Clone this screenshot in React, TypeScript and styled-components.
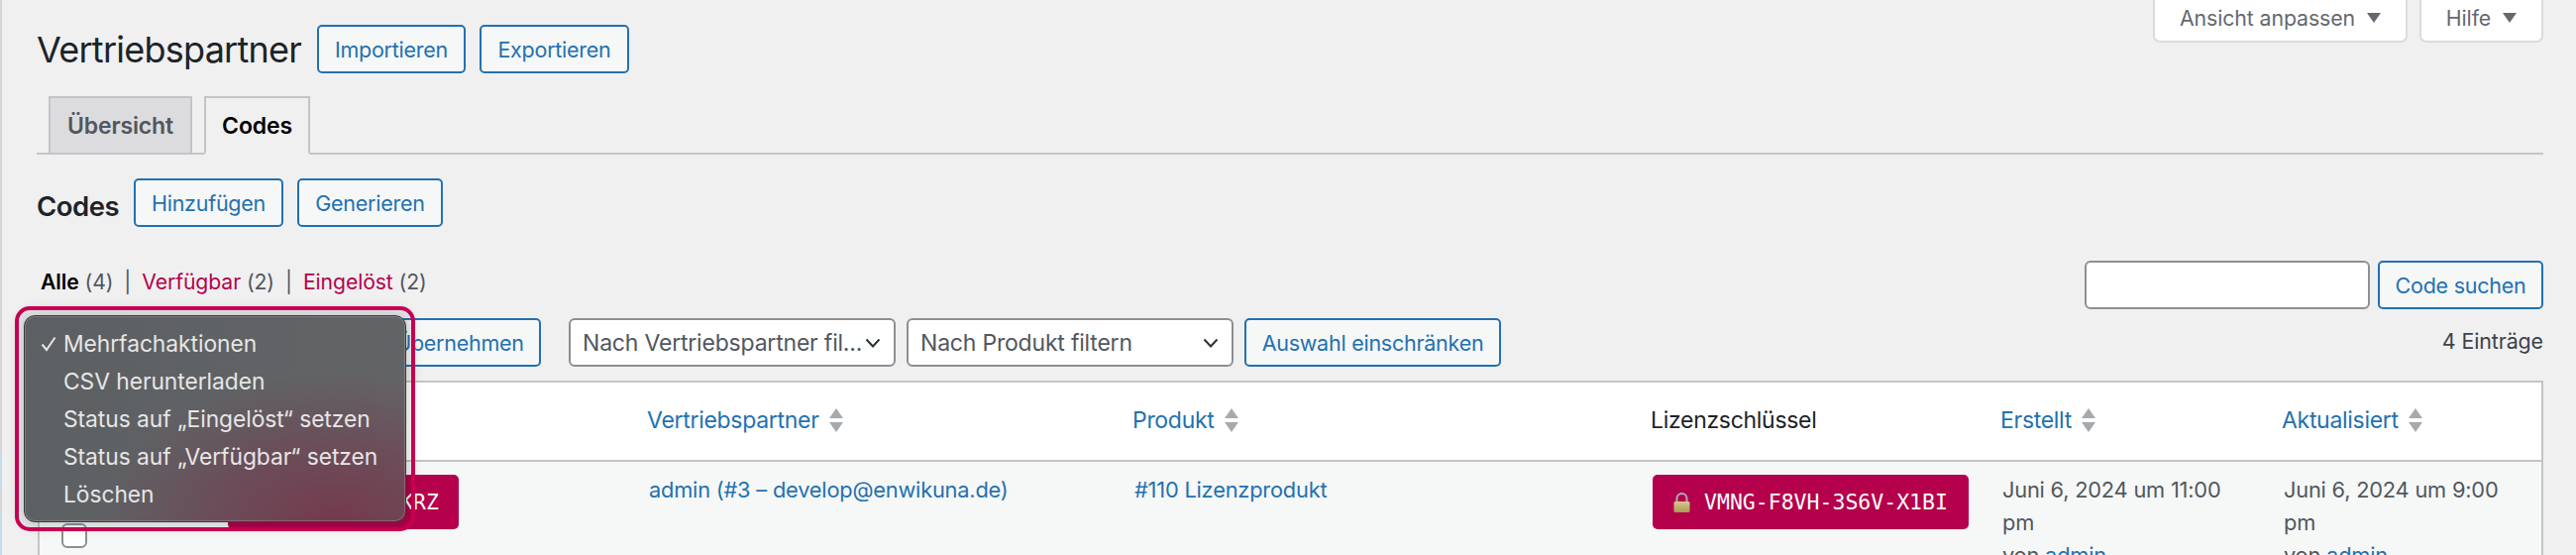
import React from "react";
import styled, { createGlobalStyle } from "styled-components";

const Global = createGlobalStyle`
  html, body { margin: 0; padding: 0; background: #f0f0f1; }
  body { width: 2600px; height: 560px; overflow: hidden; font-family: Inter, "Liberation Sans", sans-serif; font-size: 21px; color: #3c434a; }
  * { box-sizing: border-box; }
`;

const Page = styled.div`
  display: flex;
  width: 2600px;
  height: 560px;
  overflow: hidden;
  position: relative;
`;
const Edge = styled.div`
  width: 2px;
  flex: none;
  background: linear-gradient(to bottom, #d6d6d8 0 460px, #c6dcec 460px 491px, #d6d6d8 491px 517px, #c6dcec 517px);
`;
const Main = styled.main`
  flex: 1;
  min-width: 0;
  padding: 0 33px 0 35px;
`;
const Head = styled.header`
  display: flex;
  justify-content: space-between;
  align-items: flex-start;
  height: 97px;
`;
const TitleRow = styled.div`
  display: flex;
  align-items: center;
  gap: 14px;
  padding-top: 25px;
`;
const Title = styled.h1`
  margin: 0;
  font-size: 36px;
  font-weight: 400;
  letter-spacing: -0.75px;
  width: 269px;
  color: #1d2327;
  white-space: nowrap;
`;
const Button = styled.button<{ $w: number }>`
  width: ${(p) => p.$w}px;
  height: 49px;
  flex: none;
  padding: 0;
  border: 2px solid #2271b1;
  border-radius: 5px;
  background: #f6f7f7;
  color: #2271b1;
  font: 400 21.5px Inter, "Liberation Sans", sans-serif;
  letter-spacing: -0.25px;
  white-space: nowrap;
`;
const MetaLinks = styled.div`
  display: flex;
  gap: 12px;
`;
const MetaTab = styled.div<{ $w: number }>`
  width: ${(p) => p.$w}px;
  height: 43px;
  display: flex;
  align-items: center;
  justify-content: center;
  gap: 12px;
  padding-bottom: 6px;
  background: #fff;
  border: 2px solid #dcdcde;
  border-top: none;
  border-radius: 0 0 7px 7px;
  color: #646970;
  font-size: 21.3px;
  letter-spacing: -0.1px;
`;
const Caret = styled.span`
  width: 0;
  height: 0;
  border-left: 7px solid transparent;
  border-right: 7px solid transparent;
  border-top: 10px solid #646970;
`;
const Tabs = styled.nav`
  display: flex;
  gap: 12px;
  height: 59px;
  padding-left: 12px;
  border-bottom: 2px solid #c3c4c7;
`;
const Tab = styled.div<{ $active?: boolean; $w: number }>`
  width: ${(p) => p.$w}px;
  height: 59px;
  display: flex;
  align-items: center;
  justify-content: center;
  border: 2px solid #c3c4c7;
  border-bottom-color: ${(p) => (p.$active ? "#f0f0f1" : "#c3c4c7")};
  background: ${(p) => (p.$active ? "#f0f0f1" : "#dcdcde")};
  color: ${(p) => (p.$active ? "#000" : "#50575e")};
  font-size: 23px;
  font-weight: 600;
  letter-spacing: -0.15px;
`;
const SectionRow = styled.div`
  display: flex;
  align-items: center;
  gap: 14px;
  margin-top: 24px;
`;
const SectionTitle = styled.h2`
  margin: 0;
  padding-top: 6px;
  font-size: 27.5px;
  font-weight: 600;
  letter-spacing: -0.5px;
  color: #1d2327;
  width: 84px;
`;
const StatusRow = styled.div`
  display: flex;
  justify-content: space-between;
  align-items: center;
  margin-top: 34px;
  height: 49px;
`;
const StatusList = styled.div`
  display: flex;
  gap: 11px;
  padding: 0 0 8px 4px;
  font-size: 21.2px;
  letter-spacing: -0.1px;
  color: #50575e;
`;
const StatusLabel = styled.span<{ $strong?: boolean }>`
  color: ${(p) => (p.$strong ? "#000" : "#b5004b")};
  font-weight: ${(p) => (p.$strong ? 600 : 400)};
`;
const Search = styled.div`
  display: flex;
  gap: 8px;
`;
const SearchInput = styled.div`
  width: 288px;
  height: 49px;
  background: #fff;
  border: 2px solid #8c8f94;
  border-radius: 6px;
`;
const Toolbar = styled.div`
  display: flex;
  align-items: center;
  margin-top: 9px;
  height: 49px;
`;
const Select = styled.div<{ $w: number; $ml: number }>`
  display: flex;
  align-items: center;
  justify-content: space-between;
  width: ${(p) => p.$w}px;
  height: 49px;
  flex: none;
  margin-left: ${(p) => p.$ml}px;
  padding: 0 13px 0 12px;
  background: #fff;
  border: 2px solid #8c8f94;
  border-radius: 6px;
  color: #50575e;
  font-size: 23px;
  letter-spacing: -0.2px;
  white-space: nowrap;
`;
const Count = styled.div`
  margin-left: auto;
  padding-bottom: 3px;
  font-size: 21.4px;
  letter-spacing: -0.1px;
  color: #3c434a;
`;
const ApplyGap = styled.div<{ $ml: number }>`
  margin-left: ${(p) => p.$ml}px;
`;
const Table = styled.div`
  margin-top: 14px;
  margin-left: 1px;
  border: 2px solid #c3c4c7;
  border-bottom: none;
  background: #fff;
`;
const Grid = styled.div<{ $body?: boolean }>`
  display: grid;
  grid-template-columns: 172px 425px 490px 523px 353px 284px 1fr;
  height: ${(p) => (p.$body ? "200px" : "80px")};
  background: ${(p) => (p.$body ? "#f6f7f7" : "#fff")};
  border-bottom: ${(p) => (p.$body ? "none" : "2px solid #c3c4c7")};
`;
const HeadCell = styled.div<{ $link?: boolean }>`
  display: flex;
  align-items: center;
  gap: 10px;
  padding-left: 16px;
  padding-bottom: 2px;
  font-size: 23px;
  letter-spacing: -0.3px;
  color: ${(p) => (p.$link ? "#2271b1" : "#1d2327")};
`;
const BodyCell = styled.div`
  padding: 12px 30px 0 18px;
  font-size: 21.8px;
  line-height: 33px;
  letter-spacing: -0.2px;
  color: #50575e;
`;
const CheckCell = styled.div`
  padding: 62px 0 0 22px;
`;
const Checkbox = styled.div`
  width: 26px;
  height: 25px;
  border: 2px solid #8c8f94;
  border-radius: 6px;
  background: #fff;
`;
const Link = styled.span`
  color: #2271b1;
`;
const KeyBadge = styled.div`
  display: flex;
  align-items: center;
  gap: 14px;
  width: 319px;
  height: 55px;
  margin-top: 1px;
  padding-left: 21px;
  background: #b5004b;
  border-radius: 5px;
  color: #fff;
  font-family: "DejaVu Sans Mono", "Liberation Mono", monospace;
  font-size: 21.5px;
  letter-spacing: 0;
  white-space: nowrap;
`;
const CodeBadge = styled(KeyBadge)`
  width: 233px;
  justify-content: flex-end;
  padding: 0 20px 0 0;
`;
const Frame = styled.div`
  position: absolute;
  left: 15px;
  top: 309px;
  width: 404px;
  height: 227px;
  border: 4px solid #c60050;
  border-radius: 15px;
  z-index: 3;
  pointer-events: none;
`;
const Menu = styled.div`
  position: absolute;
  left: 24px;
  top: 318px;
  width: 386px;
  height: 209px;
  padding: 9px 0 0 39px;
  z-index: 2;
  border-radius: 11px;
  background: radial-gradient(ellipse 62% 72% at 82% 100%, #743a4e 0%, rgba(116, 58, 78, 0.55) 50%, rgba(116, 58, 78, 0) 100%),
    linear-gradient(100deg, #5c6063 0%, #636466 100%);
  border: 1px solid #3a3a3c;
  box-shadow: inset 0 0 0 1px rgba(255, 255, 255, 0.18), 0 0 12px 6px rgba(0, 0, 0, 0.14);
  color: #e6e6e6;
  font-size: 22.8px;
  letter-spacing: -0.05px;
`;
const MenuItem = styled.div`
  position: relative;
  height: 38px;
  line-height: 38px;
  white-space: nowrap;
`;
const Tick = styled.svg`
  position: absolute;
  left: -23px;
  top: 11px;
`;

function SortArrows() {
  return (
    <svg width="14" height="25" viewBox="0 0 14 25" aria-hidden="true">
      <path d="M7 0 14 10H0Z M0 14H14L7 24Z" fill="#a7aaad" />
    </svg>
  );
}

function Chevron() {
  return (
    <svg width="16" height="10" viewBox="0 0 16 10" aria-hidden="true">
      <path d="M1.5 1.5 8 8.5l6.500-7" fill="none" stroke="#2c3338" strokeWidth="2" />
    </svg>
  );
}

function Lock() {
  return (
    <svg width="17" height="20" viewBox="0 0 17 20" aria-hidden="true">
      <defs>
        <linearGradient id="lockBody" x1="0" y1="0" x2="0" y2="1">
          <stop offset="0" stopColor="#d8c98a" />
          <stop offset="1" stopColor="#a89a55" />
        </linearGradient>
      </defs>
      <path d="M3.500 9V6a5 5 0 0 1 10 0v3" fill="none" stroke="#a9b0b8" strokeWidth="2" />
      <rect x="0.500" y="9" width="16" height="11" rx="1.500" fill="url(#lockBody)" />
    </svg>
  );
}

const menuItems = [
  "Mehrfachaktionen",
  "CSV herunterladen",
  "Status auf „Eingelöst“ setzen",
  "Status auf „Verfügbar“ setzen",
  "Löschen",
];

export default function App() {
  return (
    <Page>
      <Global />
      <Edge />
      <Main>
        <Head>
          <TitleRow>
            <Title>Vertriebspartner</Title>
            <Button $w={150}>Importieren</Button>
            <Button $w={151}>Exportieren</Button>
          </TitleRow>
          <MetaLinks>
            <MetaTab $w={257}>
              Ansicht anpassen <Caret />
            </MetaTab>
            <MetaTab $w={125}>
              Hilfe <Caret />
            </MetaTab>
          </MetaLinks>
        </Head>
        <Tabs>
          <Tab $w={145}>Übersicht</Tab>
          <Tab $w={107} $active>
            Codes
          </Tab>
        </Tabs>
        <SectionRow>
          <SectionTitle>Codes</SectionTitle>
          <Button $w={151}>Hinzufügen</Button>
          <Button $w={147}>Generieren</Button>
        </SectionRow>
        <StatusRow>
          <StatusList>
            <span>
              <StatusLabel $strong>Alle</StatusLabel> (4)
            </span>
            <span>|</span>
            <span>
              <StatusLabel>Verfügbar</StatusLabel> (2)
            </span>
            <span>|</span>
            <span>
              <StatusLabel>Eingelöst</StatusLabel> (2)
            </span>
          </StatusList>
          <Search>
            <SearchInput />
            <Button $w={167}>Code suchen</Button>
          </Search>
        </StatusRow>
        <Toolbar>
          <ApplyGap $ml={345}>
            <Button $w={164}>Übernehmen</Button>
          </ApplyGap>
          <Select $w={330} $ml={28}>
            Nach Vertriebspartner fil...
            <Chevron />
          </Select>
          <Select $w={330} $ml={11}>
            Nach Produkt filtern
            <Chevron />
          </Select>
          <ApplyGap $ml={11}>
            <Button $w={259}>Auswahl einschränken</Button>
          </ApplyGap>
          <Count>4 Einträge</Count>
        </Toolbar>
        <Table>
          <Grid>
            <div />
            <HeadCell />
            <HeadCell $link>
              Vertriebspartner <SortArrows />
            </HeadCell>
            <HeadCell $link>
              Produkt <SortArrows />
            </HeadCell>
            <HeadCell>Lizenzschlüssel</HeadCell>
            <HeadCell $link>
              Erstellt <SortArrows />
            </HeadCell>
            <HeadCell $link>
              Aktualisiert <SortArrows />
            </HeadCell>
          </Grid>
          <Grid $body>
            <CheckCell>
              <Checkbox />
            </CheckCell>
            <BodyCell>
              <CodeBadge>KRZ</CodeBadge>
            </BodyCell>
            <BodyCell>
              <Link>admin (#3 – develop@enwikuna.de)</Link>
            </BodyCell>
            <BodyCell>
              <Link>#110 Lizenzprodukt</Link>
            </BodyCell>
            <BodyCell>
              <KeyBadge>
                <Lock />
                VMNG-F8VH-3S6V-X1BI
              </KeyBadge>
            </BodyCell>
            <BodyCell>
              Juni 6, 2024 um 11:00 pm
              <br />
              von <Link>admin</Link>
            </BodyCell>
            <BodyCell>
              Juni 6, 2024 um 9:00 pm
              <br />
              von <Link>admin</Link>
            </BodyCell>
          </Grid>
        </Table>
      </Main>
      <Menu>
        {menuItems.map((item, i) => (
          <MenuItem key={item}>
            {i === 0 && (
              <Tick width="16" height="16" viewBox="0 0 16 16" aria-hidden="true">
                <path d="M1.500 8.500 6 14 14.500 1.500" fill="none" stroke="#e6e6e6" strokeWidth="2" />
              </Tick>
            )}
            {item}
          </MenuItem>
        ))}
      </Menu>
      <Frame />
    </Page>
  );
}
